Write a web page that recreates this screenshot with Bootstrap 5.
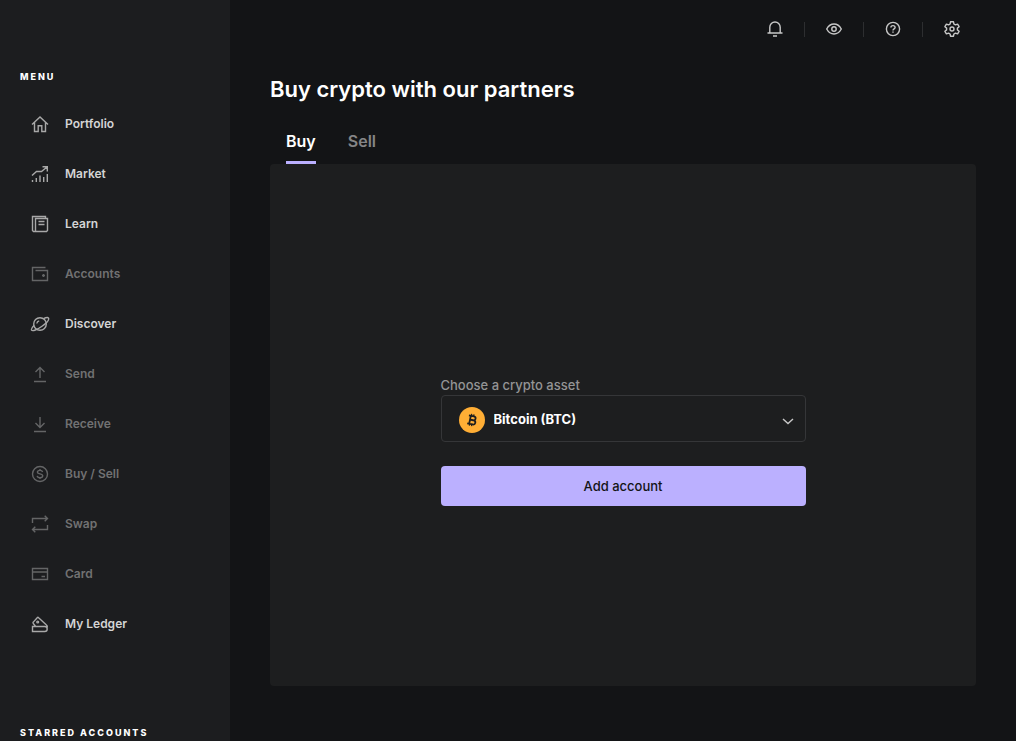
<!DOCTYPE html>
<html lang="en">
<head>
<meta charset="utf-8">
<meta name="viewport" content="width=device-width, initial-scale=1">
<title>Buy crypto</title>
<link href="https://cdn.jsdelivr.net/npm/bootstrap@5.3.0/dist/css/bootstrap.min.css" rel="stylesheet">
<style>
  body { background: #131416; color: #fff; font-family: Inter, "Liberation Sans", sans-serif; }
  svg { display: block; fill: none; stroke: currentColor; stroke-width: 1.4; }
  .sidebar { width: 230px; background: #1c1d1f; padding-top: 69px; }
  .side-title { font-size: 9px; line-height: 16px; font-weight: 800; letter-spacing: 2px; padding: 0 20px; margin: 0; text-transform: uppercase; }
  .side-menu { padding: 14px 12px 0; margin-bottom: 76px; }
  .side-link { height: 50px; padding: 0 18px; gap: 15px; font-size: 12px; line-height: 20px; font-weight: 600; color: #d4d4d4; }
  .side-link svg { color: #a8a8a8; flex: none; }
  .side-link.off { color: #717172; }
  .side-link.off svg { color: #646566; }
  .topbar { height: 58px; padding-right: 35px; }
  .tool { width: 58px; height: 20px; color: #c8c8c8; padding: 0; border: 0; background: none; }
  .rule { width: 1px; height: 15px; background: #2d2e30; }
  .content { padding: 14px 40px 55px; }
  .page-title { font-size: 22px; line-height: 34px; font-weight: 600; margin: 0; }
  .tabs { padding: 16px 16px 0; gap: 32px; }
  .tab { height: 42px; padding: 0 0 2px; border: 0; border-bottom: 3px solid transparent; background: none; color: #858586; font-size: 16px; line-height: 24px; font-weight: 600; }
  .tab.active { color: #fff; border-color: #bbb0ff; }
  .panel { background: #1d1e1f; border-radius: 4px; padding-top: 30px; }
  .buy-form { width: 365px; max-width: 100%; }
  .field-label { font-size: 13px; line-height: 20px; font-weight: 500; color: #949495; margin: 0; }
  .asset { height: 47px; padding: 4px 40px 0 52px; border: 1px solid #353638; border-radius: 4px; background: transparent; color: #fff; font-size: 13px; font-weight: 700; appearance: none; }
  .asset option { color: #000; }
  .coin { left: 18px; top: 12px; pointer-events: none; }
  .chevron { right: 12px; top: 20px; color: #c8c8c8; pointer-events: none; }
  .add { height: 40px; margin-top: 24px; padding: 2px 0 0; border: 0; border-radius: 4px; background: #bbb0ff; color: #131416; font-size: 13px; font-weight: 500; }
  .add:hover { background: #aca0f5; color: #131416; }
</style>
</head>
<body>
<div class="d-flex vh-100 overflow-hidden">
  <aside class="sidebar flex-shrink-0 overflow-hidden">
    <h2 class="side-title">Menu</h2>
    <nav class="side-menu d-flex flex-column" aria-label="Menu">
      <a href="#" class="side-link d-flex align-items-center text-decoration-none"><svg width="20" height="20" viewBox="0 0 20 20"><path d="M2 10.500 10 3l8 7.500M4.500 8.500v9h3.700v-5.700h3.600v5.700h3.700v-9"/></svg>Portfolio</a>
      <a href="#" class="side-link d-flex align-items-center text-decoration-none"><svg width="20" height="20" viewBox="0 0 20 20"><path d="M2 11.500 6.500 7.500h5L17 3M12.500 2.700h4.800v4.800M2.500 16v2M6.300 14v4M10 11.500V18M13.700 13v5M17.300 10v8"/></svg>Market</a>
      <a href="#" class="side-link d-flex align-items-center text-decoration-none"><svg width="20" height="20" viewBox="0 0 20 20"><path d="M15.500 4.500v-2h-13v14l1 1h13l1-1v-12h-12v13M8.500 7.500h6M8.500 10.500h6"/></svg>Learn</a>
      <a href="#" class="side-link off d-flex align-items-center text-decoration-none"><svg width="20" height="20" viewBox="0 0 20 20"><path d="M15.500 3.500h-13v13h15v-10h-12M12 11.500h3M13.500 10v3"/></svg>Accounts</a>
      <a href="#" class="side-link d-flex align-items-center text-decoration-none"><svg width="20" height="20" viewBox="0 0 20 20"><circle cx="10" cy="10" r="6.300"/><path d="M13.500 4.700C16 3.500 18 3.200 18.500 4.200c.8 1.500-2.200 5-6.500 8.100-4.700 3.400-9.500 5.200-10.400 3.800-.6-1 .5-2.800 2.500-4.900M6.800 9.500c.2-1.300 1.100-2.300 2.400-2.600"/></svg>Discover</a>
      <a href="#" class="side-link off d-flex align-items-center text-decoration-none"><svg width="20" height="20" viewBox="0 0 20 20"><path d="M4 17.500h12M10 14V3.500M5.500 8 10 3.500 14.500 8"/></svg>Send</a>
      <a href="#" class="side-link off d-flex align-items-center text-decoration-none"><svg width="20" height="20" viewBox="0 0 20 20"><path d="M4 17.500h12M10 3v10.500M5.500 9l4.500 4.500L14.500 9"/></svg>Receive</a>
      <a href="#" class="side-link off d-flex align-items-center text-decoration-none"><svg width="20" height="20" viewBox="0 0 20 20"><circle cx="10" cy="10" r="7.500"/><path d="M12.600 8C12.300 6.800 11.400 6.400 10 6.400c-1.500 0-2.600.6-2.600 1.800C7.400 10.600 12.700 9.200 12.700 11.800c0 1.200-1.200 1.900-2.700 1.900s-2.600-.7-2.800-1.900M10 5v1.500M10 13.500V15"/></svg>Buy / Sell</a>
      <a href="#" class="side-link off d-flex align-items-center text-decoration-none"><svg width="20" height="20" viewBox="0 0 20 20"><path d="M2.500 9V4.500h15M14.700 1.700l2.800 2.800-2.800 2.800M17.500 11v4.500h-15M5.300 12.700l-2.800 2.800 2.800 2.800"/></svg>Swap</a>
      <a href="#" class="side-link off d-flex align-items-center text-decoration-none"><svg width="20" height="20" viewBox="0 0 20 20"><path d="M2.500 4.500h15v11h-15zM2.500 8h15M11.500 12.500h3.500"/></svg>Card</a>
      <a href="#" class="side-link d-flex align-items-center text-decoration-none"><svg width="20" height="20" viewBox="0 0 20 20"><path d="M2.500 12.500h12.200a2.500 2.500 0 0 1 0 5H2.500zM5.500 12.200 3.300 9.500a1 1 0 0 1 0-1.400L7.200 3.700a1 1 0 0 1 1.400 0l7.600 7a2.600 2.600 0 0 1 .5 3.500"/><circle cx="7.700" cy="8" r=".9"/></svg>My Ledger</a>
    </nav>
    <h2 class="side-title text-nowrap">Starred accounts</h2>
  </aside>

  <div class="flex-grow-1 d-flex flex-column overflow-hidden">
    <header class="topbar d-flex align-items-center justify-content-end flex-shrink-0">
      <button type="button" class="tool d-flex justify-content-center" aria-label="Notifications"><svg width="20" height="20" viewBox="0 0 20 20"><path d="M2.500 14h15M4.800 14V8.200a5.200 5.200 0 0 1 10.400 0V14M8 17h4"/></svg></button>
      <span class="rule"></span>
      <button type="button" class="tool d-flex justify-content-center" aria-label="Hide balances"><svg width="20" height="20" viewBox="0 0 20 20"><path d="M2.700 10C4.300 7 6.800 5 10 5s5.700 2 7.300 5c-1.600 3-4.100 5-7.300 5s-5.700-2-7.300-5z"/><circle cx="10" cy="10" r="2.200"/></svg></button>
      <span class="rule"></span>
      <button type="button" class="tool d-flex justify-content-center" aria-label="Help"><svg width="20" height="20" viewBox="0 0 20 20"><circle cx="10" cy="10" r="6.600"/><path d="M7.900 8.600c0-1.300.9-2 2.100-2s2.100.7 2.100 1.800c0 1.400-2.100 1.500-2.100 3M10 12.400v1.400"/></svg></button>
      <span class="rule"></span>
      <button type="button" class="tool d-flex justify-content-center" aria-label="Settings"><svg width="20" height="20" viewBox="0 0 20 20"><path stroke-linejoin="round" d="M8.500 2.800h3l.4 2.200 1.500.9 2.200-.8 1.500 2.600L15.400 9.100v1.800l1.700 1.400-1.500 2.600-2.200-.8-1.500.9-.4 2.200h-3L8.100 15l-1.500-.9-2.200.8-1.500-2.600 1.700-1.400V9.100L2.900 7.700l1.500-2.600 2.200.8L8.100 5z"/><circle cx="10" cy="10" r="2"/></svg></button>
    </header>

    <main class="content flex-grow-1 d-flex flex-column">
      <h1 class="page-title">Buy crypto with our partners</h1>
      <div class="tabs d-flex" role="tablist">
        <button type="button" class="tab active" role="tab" aria-selected="true">Buy</button>
        <button type="button" class="tab" role="tab" aria-selected="false">Sell</button>
      </div>
      <section class="panel flex-grow-1 d-flex align-items-center justify-content-center">
        <form class="buy-form">
          <label class="field-label d-block" for="asset">Choose a crypto asset</label>
          <div class="position-relative">
            <select id="asset" class="asset w-100"><option>Bitcoin (BTC)</option></select>
            <svg class="coin position-absolute" width="26" height="26" viewBox="0 0 26 26"><circle cx="13" cy="13" r="13" fill="#ffae35" stroke="none"/><g stroke="#1d1e1f" stroke-width="1.800" transform="rotate(12 13 13)"><path d="M9 9h5.200a1.900 1.900 0 0 1 0 4H11h3.700a2.100 2.100 0 0 1 0 4.200H9M11 9v8"/><path stroke-width="1.200" d="M11.500 7v2M13.800 7v2M11.500 17v2M13.800 17v2"/></g></svg>
            <svg class="chevron position-absolute" width="12" height="12" viewBox="0 0 12 12"><path d="M1 4l5 4.500L11 4"/></svg>
          </div>
          <button type="button" class="btn add w-100">Add account</button>
        </form>
      </section>
    </main>
  </div>
</div>
<script src="https://cdn.jsdelivr.net/npm/bootstrap@5.3.0/dist/js/bootstrap.bundle.min.js"></script>
</body>
</html>
